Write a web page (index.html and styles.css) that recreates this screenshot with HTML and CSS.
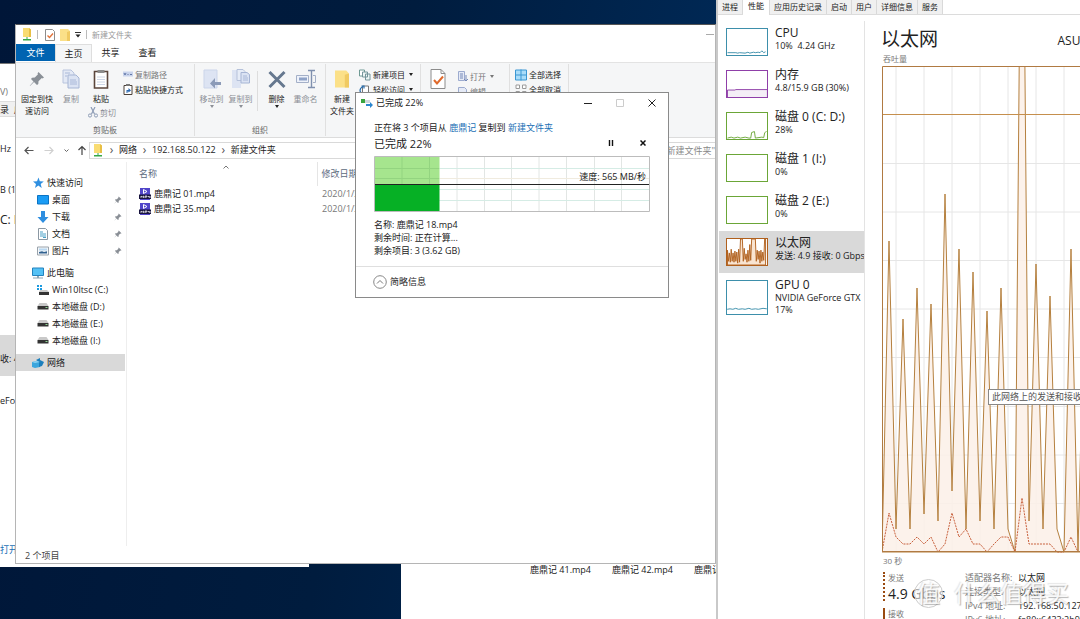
FILE: index.html
```html
<!DOCTYPE html>
<html lang="zh-CN">
<head>
<meta charset="utf-8">
<title>桌面</title>
<link rel="stylesheet" href="styles.css">
</head>
<body>
<svg class="defs" aria-hidden="true">
  <symbol id="pin" viewBox="0 0 16 16"><path d="M9.500 1 15 6.500 13.500 7.500 12.800 7 9.500 10.200 9.300 13 8 14 5 11 1 15 .8 14.800 4.500 10.500 2 8 3 6.700 5.800 6.500 9 3.200 8.500 2.500Z" fill="currentColor"/></symbol>
  <symbol id="netfolder" viewBox="0 0 10 13"><path d="M1 0h6l2 1.500V9H1z" fill="#f9dc72"/><path d="M7 0l2 1.500V9H7z" fill="#e8bf45"/><path d="M4.500 9h1v2h3.500v1.500H1V11h3.500z" fill="#35a846"/></symbol>
  <symbol id="folder" viewBox="0 0 10 12"><path d="M0 0h8l2 2v10H0z" fill="#fbe088"/><path d="M7 3l3-1v10H7z" fill="#f0ca62"/></symbol>
  <symbol id="copy" viewBox="0 0 18 20"><path d="M1 1h8l3 3v10H1z" fill="#e3e9f5" stroke="#b8c4dd"/><path d="M6 6h8l3 3v10H6z" fill="#dbe3f3" stroke="#a6b5d4"/><path d="M8 11h6M8 13h7M8 15h7M3 4h5M3 7h2" stroke="#a9b8d8"/></symbol>
  <symbol id="drive" viewBox="0 0 11 7"><path d="M2 0h7l2 3H0z" fill="#c9c9c9"/><path d="M0 3h11v3.500H0z" fill="#333"/><path d="M8 4.500h2" stroke="#8fd694"/></symbol>
  <symbol id="mp4" viewBox="0 0 12 12"><path d="M1 0h10v12H1z" fill="#5145c9"/><path d="M4.500 1.500v4l3.500-2z" fill="none" stroke="#fff"/><path d="M0 6.500h12v4.500H0z" fill="#17133d"/><path d="M2 10V8l1.200 1L4.500 8v2M6 10V8h2v1H6M9.500 8v1H11M11 8v2" fill="none" stroke="#fff" stroke-width=".7"/></symbol>
</svg>
<main class="desktop">

<section class="backwin" aria-label="后台任务管理器">
  <p class="bk bk-menu">V)</p>
  <p class="bk bk-tabs">录&nbsp; 启</p>
  <p class="bk bk-cpu">Hz</p>
  <p class="bk bk-mem">B (1</p>
  <p class="bk bk-disk">C: D</p>
  <p class="bk bk-net">收: 4</p>
  <p class="bk bk-gpu">eFor</p>
  <a class="bk bk-open" href="#">打开资</a>
</section>

<section class="filewin" aria-label="文件">
  <span>鹿鼎记 41.mp4</span><span>鹿鼎记 42.mp4</span><span>鹿鼎记 43.mp4</span>
</section>

<section class="explorer" aria-label="新建文件夹">
  <header class="titlebar">
    <svg class="i-net"><use href="#netfolder"/></svg>
    <i class="bar"></i>
    <svg class="i-check" viewBox="0 0 10 12"><path d="M.5.5h7l2 2v9h-9z" fill="#fff" stroke="#8c8c8c"/><path d="M2.500 6.500l2 2 3.500-4" fill="none" stroke="#e2733a" stroke-width="1.400"/></svg>
    <svg class="i-fold"><use href="#folder"/></svg>
    <svg class="i-drop" viewBox="0 0 6 6"><path d="M0 .5h6" stroke="#333"/><path d="M.5 2.500h5L3 5.500z" fill="#222"/></svg>
    <i class="bar"></i>
    <h1>新建文件夹</h1>
    <button class="winmin" aria-label="最小化"></button>
  </header>
  <nav class="tabs">
    <button class="file">文件</button><button class="on">主页</button><button>共享</button><button>查看</button>
  </nav>
  <div class="ribbon">
    <div class="group clip">
      <div class="tools">
        <button class="big"><svg class="i-pin"><use href="#pin"/></svg><span>固定到快<br>速访问</span></button>
        <button class="big off"><svg class="i18"><use href="#copy"/></svg>复制</button>
        <div class="stack paste">
          <button class="big"><svg class="i18" viewBox="0 0 18 20"><path d="M2.500 2.500h13v16.500h-13z" fill="#fff" stroke="#5b463c" stroke-width="1.600"/><path d="M5.500 1h7v3h-7z" fill="#8b8b8b"/><path d="M5 8h8M5 10.500h8M5 13h8M5 15.500h8" stroke="#cdd6e6"/></svg>粘贴</button>
          <button class="small off"><svg class="i10" viewBox="0 0 10 11"><path d="M3 0l3.500 7M7 0L3.500 7" stroke="#8d9cb5" stroke-width="1.200"/><circle cx="2" cy="8.500" r="1.600" fill="none" stroke="#8d9cb5"/><circle cx="8" cy="8.500" r="1.600" fill="none" stroke="#8d9cb5"/></svg>剪切</button>
        </div>
        <div class="stack">
          <button class="small dim"><svg class="i10" viewBox="0 0 10 11"><path d="M0 2.500h10v5H0z" fill="#c9d4ec"/><path d="M1 4l1 2 1-2M4.500 5.500h1M7 5.500h2" stroke="#6479a8" fill="none"/></svg>复制路径</button>
          <button class="small"><svg class="i10" viewBox="0 0 10 11"><path d="M1 1.500h8v9H1z" fill="#fff" stroke="#4b4038"/><path d="M3 0h4v2H3z" fill="#777"/><path d="M3.500 9V6h2V4L8 6.500 5.500 8.500V7.500h-1V9z" fill="#2b68b0"/></svg>粘贴快捷方式</button>
        </div>
      </div>
      <p class="cap">剪贴板</p>
    </div>
    <div class="group org">
      <div class="tools">
        <button class="big off"><svg class="i18" viewBox="0 0 18 20"><path d="M1 1h13v18H1z" fill="#dde4f3" stroke="#cbd5ea"/><path d="M18 13h-6V9l-5 5.500 5 5V16h6z" fill="#8c9bb8"/></svg>移动到<i class="dd"></i></button>
        <button class="big off"><svg class="i18" viewBox="0 0 18 20"><path d="M0 1h9v18H0z" fill="#dde4f3"/><path d="M5 .5h6l2 2v9H5z" fill="#e6ecf7" stroke="#b5c1da"/><path d="M9 3.500h6l2.500 2V14H9z" fill="#dbe3f3" stroke="#a6b5d4"/><path d="M11 7h4M11 9h5M11 11h5" stroke="#a9b8d8"/></svg>复制到<i class="dd"></i></button>
        <i class="vline"></i>
        <button class="big"><svg class="i18" viewBox="0 0 18 20"><path d="M1.500 3l15 15M16.500 3l-15 15" stroke="#66788f" stroke-width="3"/></svg>删除<i class="dd"></i></button>
        <button class="big off"><svg class="i20" viewBox="0 0 20 20"><path d="M.5 6.500h12v7H.5z" fill="#eef2fa" stroke="#a4b0c8"/><path d="M3 8.500h8v3H3z" fill="#8fa3c8"/><path d="M12 1.500h7M12 18.500h7M15.500 2v16" stroke="#7f90ae" stroke-width="1.400"/><path d="M17 6.500h2.500v7H17" fill="none" stroke="#a4b0c8"/></svg>重命名</button>
      </div>
      <p class="cap">组织</p>
    </div>
    <div class="group new">
      <div class="tools">
        <button class="big"><svg class="i-bigfold"><use href="#folder"/></svg><span>新建<br>文件夹</span></button>
        <div class="stack">
          <button class="small"><svg class="i12" viewBox="0 0 12 11"><path d="M.5.5h5v6h-5z" fill="#fff" stroke="#6f9a94"/><path d="M3.500 2.500h5v5h-5zM6.500 4.500h4.500v6H6.500z" fill="#edf5f4" stroke="#75949a"/></svg>新建项目<i class="dd"></i></button>
          <button class="small"><svg class="i12" viewBox="0 0 12 11"><path d="M3.500 1.500h6v8h-6z" fill="#fff" stroke="#777"/><path d="M4 10C0 8 0 4 4 2M2.500 1.500H5V4" fill="none" stroke="#2a6fae" stroke-width="1.200"/></svg>轻松访问<i class="dd"></i></button>
        </div>
      </div>
      <p class="cap">新建</p>
    </div>
    <div class="group open">
      <div class="tools">
        <button class="big"><svg class="i18" viewBox="0 0 18 20"><path d="M2 .5h10l4 4v15H2z" fill="#fff" stroke="#8c8c8c"/><path d="M12 .5v4h4" fill="none" stroke="#8c8c8c"/><path d="M5 11l3 3.500 6-7" fill="none" stroke="#e06a2c" stroke-width="2"/></svg>属性</button>
        <div class="stack">
          <button class="small dim"><svg class="i10" viewBox="0 0 10 11"><path d="M.5.5h6v9h-6z" fill="#e5eaf6" stroke="#9cabcf"/><path d="M2 3h3M2 5h3M2 7h3" stroke="#7589b8"/><path d="M8 4v6M6 8l2 2 2-2" fill="none" stroke="#7589b8"/></svg>打开<i class="dd"></i></button>
          <button class="small dim"><svg class="i10" viewBox="0 0 10 11"><path d="M.5 1.500h6l2 2v7h-8z" fill="#e5eaf6" stroke="#9cabcf"/></svg>编辑</button>
        </div>
      </div>
      <p class="cap">打开</p>
    </div>
    <div class="group sel">
      <div class="tools">
        <div class="stack">
          <button class="small"><svg class="i12" viewBox="0 0 12 11"><path d="M.5.5h11v10H.5z" fill="#a9dcf9" stroke="#3b97d3"/><path d="M6 0v11M0 5.500h12" stroke="#3b97d3"/></svg>全部选择</button>
          <button class="small"><svg class="i12" viewBox="0 0 12 11"><path d="M1 .5h3.500V4H1zM7.500.5H11V4H7.500zM1 7h3.500v3.500H1zM7.500 7H11v3.500H7.500z" fill="#fff" stroke="#9a9a9a"/></svg>全部取消</button>
        </div>
      </div>
      <p class="cap">选择</p>
    </div>
  </div>
  <div class="address">
    <button aria-label="后退"><svg class="i10" viewBox="0 0 10 10"><path d="M9.500 5H1M4.500 1.500L1 5l3.500 3.500" fill="none" stroke="#555" stroke-width="1.200"/></svg></button>
    <button aria-label="前进"><svg class="i10" viewBox="0 0 10 10"><path d="M.5 5H9M5.500 1.500L9 5 5.500 8.500" fill="none" stroke="#d0d0d0" stroke-width="1.200"/></svg></button>
    <button class="hist" aria-label="历史"><svg class="i4" viewBox="0 0 5 5"><path d="M.5 1.500l2 2 2-2" fill="none" stroke="#666"/></svg></button>
    <button class="up" aria-label="向上"><svg class="i10" viewBox="0 0 10 10"><path d="M5 9.500V1M1.500 4.500L5 1l3.500 3.500" fill="none" stroke="#444" stroke-width="1.200"/></svg></button>
    <div class="crumbs">
      <svg class="i-net"><use href="#netfolder"/></svg><b>›</b><a href="#">网络</a><b>›</b><a href="#">192.168.50.122</a><b>›</b><a href="#">新建文件夹</a>
    </div>
    <input class="search" aria-label="搜索" placeholder='搜索"新建文件夹"'>
  </div>
  <div class="body">
    <nav class="side">
      <a href="#" class="root"><svg class="i12" viewBox="0 0 12 12"><path d="M6.500.5l1.300 3.700 4 .2-3.100 2.500 1 4-3.400-2.300L3 11l1-4L1 4.500l4-.2z" fill="#2f8fe0"/></svg>快速访问</a>
      <a href="#"><svg class="i12" viewBox="0 0 12 12"><path d="M.5 1.500h11v8.500H.5z" fill="#1a9cf5" stroke="#0b74c4"/></svg>桌面<svg class="p"><use href="#pin"/></svg></a>
      <a href="#"><svg class="i12" viewBox="0 0 12 12"><path d="M4 0h4v6h3.500L6 12 .5 6H4z" fill="#2e8ee0"/></svg>下载<svg class="p"><use href="#pin"/></svg></a>
      <a href="#"><svg class="i12" viewBox="0 0 12 12"><path d="M1.500.5h7l2 2v9h-9z" fill="#fff" stroke="#8b98a3"/><path d="M3 4h3M3 6h6M3 8h6M6 9.500h3" stroke="#4aa1c8"/></svg>文档<svg class="p"><use href="#pin"/></svg></a>
      <a href="#"><svg class="i12" viewBox="0 0 12 12"><path d="M.5 2h11v8H.5z" fill="#f4f7fa" stroke="#9aa3ab"/><path d="M2 3.500h8v2H2z" fill="#b9d8f2"/><path d="M2 8.500V7l3-.8 2 .8 3-.7v2.200z" fill="#31618f"/></svg>图片<svg class="p"><use href="#pin"/></svg></a>
      <a href="#" class="root sep"><svg class="i12" viewBox="0 0 12 12"><path d="M.5 1h11v7.500H.5z" fill="#54c1f5" stroke="#2383bf"/><path d="M5 9h2v1.500H5zM1 10.500h10v1H1z" fill="#8ea6b5"/></svg>此电脑</a>
      <a href="#"><svg class="i12" viewBox="0 0 12 12"><path d="M0 1h2v2H0zM3 1h2v2H3zM0 4h2v2H0zM3 4h2v2H3z" fill="#1d9be0"/><path d="M3 6h7l2 2H2z" fill="#c9c9c9"/><path d="M2 8h10v3H2z" fill="#333"/></svg>Win10ltsc (C:)</a>
      <a href="#"><svg class="i-drive"><use href="#drive"/></svg>本地磁盘 (D:)</a>
      <a href="#"><svg class="i-drive"><use href="#drive"/></svg>本地磁盘 (E:)</a>
      <a href="#"><svg class="i-drive"><use href="#drive"/></svg>本地磁盘 (I:)</a>
      <a href="#" class="root sep sel-nav"><svg class="i12" viewBox="0 0 12 12"><path d="M0 5l5-1 3 1v5l-5 1-3-1z" fill="#3ba6dd"/><path d="M4 3l4-2v2l4 2-2 4-3 1V5z" fill="#1b7fbd"/><path d="M0 5l5-1 3 1-5 1z" fill="#8dd3f3"/></svg>网络</a>
    </nav>
    <table class="files">
      <thead><tr><th class="c-name">名称<svg class="sort" viewBox="0 0 6 4"><path d="M.5 3.500L3 1l2.500 2.500" fill="none" stroke="#777"/></svg></th><th>修改日期</th></tr></thead>
      <tbody>
        <tr><td><svg class="i12"><use href="#mp4"/></svg>鹿鼎记 01.mp4</td><td class="date">2020/1/31</td></tr>
        <tr><td><svg class="i12"><use href="#mp4"/></svg>鹿鼎记 35.mp4</td><td class="date">2020/1/31</td></tr>
      </tbody>
    </table>
  </div>
  <footer class="status">2 个项目</footer>
</section>

<section class="dialog" role="dialog" aria-label="已完成 22%">
  <header class="dtitle">
    <svg class="i12" viewBox="0 0 12 12"><path d="M0 2h4v4H0z" fill="#3aa53f"/><path d="M4 3h5v3H4z" fill="#cfd6dc"/><path d="M5 7h4V5l3 3-3 3V9H5z" fill="#2b86cf"/></svg>
    <h2>已完成 22%</h2>
    <button aria-label="最小化"><svg class="i8" viewBox="0 0 8 8"><path d="M0 4.500h8" stroke="#222"/></svg></button>
    <button aria-label="最大化" disabled><svg class="i8" viewBox="0 0 8 8"><path d="M.5.500h7v7h-7z" fill="none" stroke="#ccc"/></svg></button>
    <button aria-label="关闭"><svg class="i8" viewBox="0 0 8 8"><path d="M.5.500l7 7M7.500.500l-7 7" stroke="#222"/></svg></button>
  </header>
  <div class="dbody">
    <p class="from">正在将 3 个项目从 <a href="#">鹿鼎记</a> 复制到 <a href="#">新建文件夹</a></p>
    <div class="prog"><h3>已完成 22%</h3>
      <button aria-label="暂停"><svg class="i6" viewBox="0 0 6 6"><path d="M1.500 0v6M4.500 0v6" stroke="#111" stroke-width="1.400"/></svg></button>
      <button aria-label="取消"><svg class="i6" viewBox="0 0 6 6"><path d="M.5.500l5 5M5.500.500l-5 5" stroke="#111" stroke-width="1.500"/></svg></button>
    </div>
    <div class="speed">
      <svg viewBox="0 0 276 56" preserveAspectRatio="none">
        <path d="M0 0h276v56H0z" fill="#fff"/>
        <path d="M28 0v56M55.500 0v56M83 0v56M110.500 0v56M137.500 0v56M165 0v56M192.500 0v56M220.500 0v56M247.500 0v56" stroke="#e2e6e4"/>
        <path d="M0 12.500h276M0 33.500h276M0 44.500h276" stroke="#d5ece5"/><path d="M0 22.500h276" stroke="#f0ebdf"/>
        <path d="M1 1h64.500v27H1z" fill="#a6e58e"/><path d="M28 1v27M55.500 1v27M1 12.500h64M1 22.500h64" stroke="#93d480"/>
        <path d="M1 28h64.500v27H1z" fill="#06b025"/>
        <path d="M1 28.500h274" stroke="#222"/>
        <path d="M.5.500h275v55H.5z" fill="none" stroke="#bcbcbc"/>
      </svg>
      <span>速度: 565 MB/秒</span>
    </div>
    <p>名称: 鹿鼎记 18.mp4</p><p>剩余时间: 正在计算...</p><p>剩余项目: 3 (3.62 GB)</p>
  </div>
  <footer><button><svg class="i14" viewBox="0 0 14 14"><circle cx="7" cy="7" r="6.300" fill="none" stroke="#888"/><path d="M4 8.500l3-3 3 3" fill="none" stroke="#777"/></svg>简略信息</button></footer>
</section>

<section class="taskmgr" aria-label="任务管理器">
  <nav class="ttabs"><button>进程</button><button class="on">性能</button><button>应用历史记录</button><button>启动</button><button>用户</button><button>详细信息</button><button>服务</button></nav>
  <div class="tbody">
    <ul class="meters">
      <li><svg class="th cpu" viewBox="0 0 42 28"><path d="M0 25.500h9l2 .5 2-.5 6 .5 3-1 2 1 4-1 2 .5 3-.5 2 .5 2-2 2 2 2-1" /></svg><div><h4>CPU</h4><p>10%&nbsp; 4.24 GHz</p></div></li>
      <li><svg class="th mem" viewBox="0 0 42 28"><path d="M0 20.500h8l1-.5h34v10H0z"/></svg><div><h4>内存</h4><p>4.8/15.9 GB (30%)</p></div></li>
      <li><svg class="th dsk" viewBox="0 0 42 28"><path d="M0 27l4-1 3 1 4-1 3 1 5-1 4 1h2l1-6 3-1 1 7 7-1 2 .5 1-5 2-2"/></svg><div><h4>磁盘 0 (C: D:)</h4><p>28%</p></div></li>
      <li><svg class="th dsk" viewBox="0 0 42 28"></svg><div><h4>磁盘 1 (I:)</h4><p>0%</p></div></li>
      <li><svg class="th dsk" viewBox="0 0 42 28"></svg><div><h4>磁盘 2 (E:)</h4><p>0%</p></div></li>
      <li class="cur"><svg class="th eth" viewBox="0 0 42 28"><path d="M0 28V12l1 12 1-9 1 10 1-14 1 13 1-9 1 10 1-12 1 11 1-10 1 12 1-15 1 14L14 0h2l1 24 1-14 1 12 1-6 1 9 1-13 1 12 1-18 1 17L26 0h4l1 24 1-12 1 10 1-9 1 13 1-14 1 12 1-10 1 9L40 0h1v28z"/></svg><div><h4>以太网</h4><p>发送: 4.9 接收: 0 Gbps</p></div></li>
      <li class="gpu"><svg class="th cpu" viewBox="0 0 42 35"><path d="M0 30l3-.5 3 .5 3-1 3 1 4-.5 3 .5 4-1 3 1 4-.5 3 .5 5-1 4 .5"/></svg><div><h4>GPU 0</h4><p>NVIDIA GeForce GTX</p><p>17%</p></div></li>
    </ul>
    <article class="detail">
      <header><h2>以太网</h2><span>ASUS</span></header>
      <p class="axis">吞吐量</p>
      <svg class="chart">
        <path class="grid" d="M14 0v486M42 0v486M70 0v486M98 0v486M126 0v486M154 0v486M182 0v486M0 97.500h900M0 146h900M0 194.500h900M0 243h900M0 291.500h900M0 340.500h900M0 389h900M0 437.500h900"/>
        <path class="send" d="M0 486L7 175 14 463 21 253 28 463 35 222 42 448 49 238 56 455 63 128 70 425 77 183 84 463 91 206 98 455 105 245 112 463 119 222 126 463 133 486 140 -324 147 455 154 198 161 463 168 230 175 463 182 486 189 183 196 486 203 200V486z"/>
        <path class="recv" d="M0 486L7 447 14 471 21 478H28L35 471 42 478 49 471 56 486 63 478 70 447 77 471 84 463 91 478H98L105 486 112 478 119 471H126L133 486 140 432 147 478H168L175 486H182L189 471 196 486"/>
        <path class="limit" d="M0 48.500h900"/>
        <path class="frame" d="M900 .5H.5v485H900"/>
      </svg>
      <p class="axis secs">30 秒</p>
      <div class="stats">
        <dl class="rates"><div class="s"><dt>发送</dt><dd>4.9 Gbps</dd></div><div class="r"><dt>接收</dt><dd>0 Kbps</dd></div></dl>
        <dl class="props"><dt>适配器名称:</dt><dd>以太网</dd><dt>连接类型:</dt><dd>以太网</dd><dt>IPv4 地址:</dt><dd>192.168.50.127</dd><dt>IPv6 地址:</dt><dd>fe80::6433:2b97</dd></dl>
      </div>
    </article>
  </div>
  <div class="tip" role="tooltip">此网络上的发送和接收活动</div>
</section>
<div class="mark"><span class="seal">值</span><span>什么值得买</span></div>
</main>
</body>
</html>
```

FILE: styles.css
```css
* { box-sizing: border-box; margin: 0; padding: 0; }
body { font: 9px/12px "Open Sans", "Noto Sans CJK SC", sans-serif; color: #222; }
h1, h2, h3, h4, th, b { font-weight: 400; font-size: inherit; }
button, input { font: inherit; color: inherit; border: 0; background: none; }
a { color: inherit; text-decoration: none; }
ul { list-style: none; }
svg { flex: none; display: block; }
.defs { position: absolute; width: 0; height: 0; }
.desktop { position: relative; height: 100vh; min-height: 560px; overflow: hidden; background: linear-gradient(100deg, #001638, #001c3e 35%, #002a58 65%, #003064); white-space: nowrap; }

.i4 { width: 5px; height: 5px; }
.i6 { width: 6px; height: 6px; }
.i8 { width: 8px; height: 8px; }
.i10 { width: 10px; height: 11px; }
.i12 { width: 12px; height: 12px; }
.i14 { width: 14px; height: 14px; }
.i18 { width: 18px; height: 20px; }
.i20 { width: 20px; height: 20px; }

/* windows behind the explorer */
.backwin { position: absolute; left: 0; top: 63px; bottom: 52px; width: 309px; background: #fff; border-top: 1px solid #777; }
.bk { display: block; height: 16px; line-height: 16px; }
.bk-menu { margin-top: 20px; color: #777; }
.bk-tabs { background: #f0f0f0; border: 1px solid #ddd; border-left: 0; margin: 1px 0 24px; }
.bk-mem { margin: 24px 0 14px; }
.bk-cpu { height: 17px; }
.bk-disk { font-size: 12px; }
.bk-net { background: #d9d9d9; height: 41px; padding-top: 16px; margin: 107px 0 17px; }
.bk-gpu { margin-bottom: 133px; }
.bk-open { color: #1a6fb5; }
.filewin { position: absolute; left: 401px; top: 560px; bottom: 0; width: 315px; overflow: hidden; background: #fff; padding: 4px 0 0 129px; display: flex; gap: 21px; }

/* explorer */
.explorer { position: absolute; left: 15px; top: 24px; bottom: 55px; width: 701px; display: flex; flex-direction: column; background: #fff; border: 1px solid #b5b5b5; border-top-color: #555; }
.titlebar { height: 19px; display: flex; align-items: center; gap: 5px; padding-left: 6px; color: #999; font-size: 8px; }
.titlebar .bar { width: 1px; height: 9px; background: #bbb; }
.titlebar .bar + svg { margin-left: 2px; }
.titlebar .bar + h1 { flex: 1; }
.i-net { width: 10px; height: 13px; }
.i-check { width: 10px; height: 12px; }
.i-fold { width: 10px; height: 12px; }
.i-drop { width: 6px; height: 6px; }
.winmin { width: 8px; height: 1px; background: #aaa; margin-right: 1px; }
.tabs { display: flex; height: 18px; }
.tabs button { width: 37px; font-size: 9px; }
.tabs .file { background: #0063b1; color: #fff; width: 39px; height: 17px; }
.tabs .on { background: #f5f6f7; border: 1px solid #dedede; border-bottom: 0; }
.ribbon { display: flex; height: 76px; background: #f5f6f7; border-top: 1px solid #e3e3e3; border-bottom: 1px solid #dcdcdc; font-size: 8px; }
.group { display: flex; flex-direction: column; justify-content: space-between; border-right: 1px solid #e0e0e0; margin: 1px 0; }
.tools { display: flex; }
.cap { text-align: center; color: #666; }
.big { flex: none; display: flex; flex-direction: column; align-items: center; gap: 4px; padding-top: 5px; width: 32px; }
.big svg { height: 20px; }
.off { color: #8b8f96; }
.dim { color: #777; }
.stack { display: flex; flex-direction: column; padding: 3px 0 0 7px; }
.paste { padding: 0 0 0 4px; }
.small { display: flex; align-items: center; gap: 2px; height: 15px; }
.dd { border: 2px solid transparent; border-top: 3px solid currentColor; border-bottom: 0; }
.small .dd { margin-left: 2px; }
.big .dd { margin-top: -4px; }
.i-pin { width: 16px; color: #8a9097; padding: 2px 0; }
.clip { width: 179px; }
.clip .big { width: 26px; }
.clip .big:first-child { width: 42px; }
.clip .paste .big:first-child { width: 26px; }
.org { width: 131px; }
.org .tools { padding-left: 2px; }
.org .big { width: 29px; }
.vline { width: 1px; height: 40px; background: #ddd; margin: 7px 4px 0 2px; }
.new { width: 95px; }
.i-bigfold { width: 14px; }
.new .stack { padding-left: 1px; }
.open { width: 89px; }
.open .big { width: 34px; }
.open .stack { padding: 5px 0 0 3px; }
.sel { width: 59px; }
.sel .stack { padding-left: 5px; }
.address { display: flex; align-items: center; height: 24px; padding: 0 0 0 8px; }
.address button { width: 20px; display: flex; align-items: center; }
.address .hist { width: 13px; }
.address button.up { width: 12px; }
.crumbs { flex: 1; display: flex; align-items: center; height: 17px; border: 1px solid #d9d9d9; padding-left: 3px; }
.crumbs b { width: 15px; text-align: center; font-size: 12px; color: #555; padding-bottom: 1px; }
.crumbs .i-net { margin-right: 1px; }
.search { width: 77px; height: 17px; border: 1px solid #d9d9d9; border-right: 0; margin-left: 6px; padding-left: 6px; }
.search::placeholder { color: #888; opacity: 1; }
.body { flex: 1; display: flex; min-height: 0; }
.side { width: 111px; border-right: 1px solid #eee; padding-top: 12px; }
.side a { display: flex; align-items: center; gap: 2px; height: 17px; padding: 0 3px 0 21px; margin-right: 1px; }
.side a > svg:first-child { margin-right: 1px; }
.side a.root { padding-left: 16px; }
.side .sep { margin-top: 5px; }
.side .p { width: 8px; height: 8px; color: #8a8f96; margin-left: auto; }
.side .sel-nav { background: #d9d9d9; }
.i-drive { width: 12px; height: 7px; }
.files { border-collapse: collapse; margin: 0 0 auto 12px; table-layout: fixed; }
.files th { text-align: left; height: 24px; color: #5d6b80; }
.files th + th { border-left: 1px solid #e5e5e5; padding-left: 4px; }
.files .c-name { width: 178px; position: relative; }
.sort { position: absolute; left: 84px; top: 3px; width: 6px; height: 4px; }
.files td { height: 15px; }
.files td svg { float: left; margin-right: 3px; }
.files .date { color: #777; padding-left: 5px; }
.status { height: 17px; padding: 4px 9px 0; color: #444; }

/* copy dialog */
.dialog { position: absolute; left: 355px; top: 92px; width: 314px; background: #fff; border: 1px solid #8a8a8a; }
.dtitle { display: flex; align-items: center; height: 19px; padding-left: 5px; }
.dtitle h2 { flex: 1; padding-left: 3px; }
.dtitle button { width: 32px; display: flex; justify-content: center; }
.dbody { padding: 10px 18px 9px; line-height: 13px; }
.from { line-height: 12px; }
.from a { color: #1a6fb5; }
.prog { display: flex; align-items: center; height: 18px; margin-bottom: 4px; }
.prog h3 { flex: 1; font-size: 11px; }
.prog button { width: 32px; display: flex; justify-content: center; }
.prog button:last-child { margin-right: -9px; }
.speed { position: relative; height: 56px; margin-bottom: 6px; }
.speed svg { width: 100%; height: 100%; }
.speed span { position: absolute; right: 4px; top: 14px; }
.dialog footer { border-top: 1px solid #dfdfdf; padding: 8px 17px; }
.dialog footer button { display: flex; align-items: center; gap: 3px; }

/* task manager */
.taskmgr { position: absolute; left: 716px; right: 0; top: 0; bottom: 0; overflow: hidden; background: #fff; border-left: 2px solid #c9c9c9; display: flex; flex-direction: column; }
.ttabs { display: flex; height: 15px; flex: none; border-bottom: 1px solid #dcdcdc; font-size: 8px; }
.ttabs button { padding: 0 4px; background: #f0f0f0; border-right: 1px solid #d9d9d9; }
.ttabs .on { background: #fff; padding: 0 5px 4px; height: 15px; }
.tbody { flex: 1; display: flex; min-height: 0; padding-top: 6px; }
.meters { width: 147px; flex: none; overflow: hidden; border-right: 1px solid #e3e3e3; }
.meters li { display: flex; gap: 7px; height: 42px; padding: 6px 0 0 7px; margin-left: 1px; }
.meters .cur { background: #d9d9d9; }
.meters .gpu { height: 50px; }
.meters h4 { font-size: 12px; line-height: 14px; }
.meters li > div { margin-top: -1px; }
.th { width: 42px; height: 28px; margin-top: 1px; background: #fff; border: 1px solid; fill: none; stroke: currentColor; }
.gpu .th { height: 35px; }
.cpu { color: #3d8fab; }
.cpu path { fill: #f0f7fa; }
.mem { color: #8f3fa8; }
.mem path { fill: #f4eef6; }
.dsk { color: #6ba637; }
.eth { color: #b0601d; }
.eth path { fill: #f9e4d1; }
.detail { flex: 1; min-width: 0; padding: 5px 0 0 16px; display: flex; flex-direction: column; overflow: hidden; }
.detail header { display: flex; flex: none; justify-content: space-between; align-items: center; height: 25px; font-size: 12px; }
.detail h2 { font-size: 19px; line-height: 22px; }
.detail header span { margin-right: -7px; padding-top: 5px; }
.axis { color: #777; font-size: 8px; line-height: 13px; flex: none; padding: 1px 0 1px 2px; }
.chart { width: 100%; height: 487px; flex: none; margin: 0 0 0 1px; fill: none; }
.secs { padding-bottom: 0; }
.grid { stroke: #e6e6e6; }
.send { stroke: #b5803f; fill: #fbf0e7; fill-opacity: .85; }
.recv { stroke: #c8603c; stroke-dasharray: 2 1; }
.limit { stroke: #c58f4d; }
.frame { stroke: #b07a42; }
.stats { display: flex; flex: none; height: 54px; padding: 5px 0 0 2px; }
.stats dt { color: #777; }
.rates { width: 82px; flex: none; }
.rates div { border-left: 2px solid #9a4a10; padding-left: 3px; height: 29px; }
.rates .s { border-left-style: dotted; margin-bottom: 7px; }
.rates dt { font-size: 8px; }
.rates dd { font-size: 14px; line-height: 20px; }
.props { display: grid; grid-template-columns: 53px auto; align-content: start; row-gap: 2px; }
.tip { position: absolute; left: 270px; top: 389px; height: 16px; padding: 1px 3px; background: #fff; border: 1px solid #888; color: #555; }
.mark { position: absolute; left: 914px; top: 578px; display: flex; align-items: center; gap: 11px; color: #fffd; font-size: 23px; line-height: 30px; text-shadow: 1px 1px 1px #7778, -1px -1px 1px #bbb5; }
.seal { width: 29px; height: 29px; line-height: 26px; border: 1px solid #ccc; border-radius: 50%; text-align: center; background: #fff9; }
```
